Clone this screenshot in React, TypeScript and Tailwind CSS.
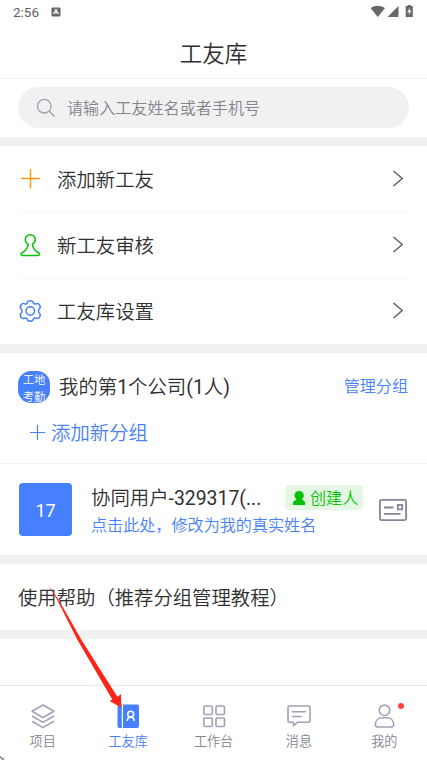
import React from 'react';

const Chevron = () => (
  <svg className="mb-px mr-[5px] h-[18px] w-3" viewBox="0 0 12 18" fill="none" stroke="#55555c" strokeWidth="1.3">
    <path d="M1.5 1 L10.3 8.5 L1.5 16" />
  </svg>
);

const PlusIcon = () => (
  <svg className="mb-px h-6 w-6" viewBox="0 0 24 24" fill="none" stroke="#ff9a0c" strokeWidth="1.4">
    <path d="M12.5 2V21.5M3 11.5H22" />
  </svg>
);

const PawnIcon = () => (
  <svg className="mb-[2px] h-6 w-6" viewBox="0 0 24 24" fill="none" stroke="#07c107" strokeWidth="1.5" strokeLinejoin="round">
    <path d="M10.2 11.2C8.3 10 7.3 8.4 7.3 6.7C7.3 3.8 9.5 1.7 12.3 1.7S17.3 3.8 17.3 6.7C17.3 8.4 16.3 10 14.4 11.2C14.7 14.2 16.4 16.8 18.3 18.5L20.8 19.8C22.2 20.8 21.4 22.5 20 22.5H4.6C3.2 22.5 2.4 20.8 3.8 19.8L6.3 18.5C8.2 16.8 9.9 14.2 10.2 11.2Z" />
  </svg>
);

const GearIcon = () => (
  <svg className="mb-[2px] h-6 w-6" viewBox="0 0 24 24" fill="none" stroke="#4680ff" strokeWidth="1.5" strokeLinejoin="round">
    <path d="M9.2 3.8C9.7 1.1 14.8 1.1 15.3 3.8C16 5.2 17.1 5.3 18.4 4.6C21 3.7 23.5 7.9 21.4 9.7C20.2 10.8 20.2 13.2 21.4 14.3C23.5 16.1 21 20.3 18.4 19.4C17.1 18.7 16 18.8 15.3 20.2C14.8 22.9 9.7 22.9 9.2 20.2C8.5 18.8 7.4 18.7 6.1 19.4C3.5 20.3 1 16.1 3.1 14.3C4.3 13.2 4.3 10.8 3.1 9.7C1 7.9 3.5 3.7 6.1 4.6C7.4 5.3 8.5 5.2 9.2 3.8Z" />
    <circle cx="12.3" cy="12" r="4.2" />
  </svg>
);

const MenuRow = ({ icon, label, last }: { icon: React.ReactNode; label: string; last?: boolean }) => (
  <div className={`mx-[18px] flex items-center ${last ? 'h-[65px]' : 'h-[66px] border-b border-[#f7f7f7]'}`}>
    {icon}
    <span className="ml-[15px] flex-1 pt-[3px] text-[19.4px] leading-7">{label}</span>
    <Chevron />
  </div>
);

const Band = () => <div className="h-[9px] shrink-0 bg-[#f1f1f1]" />;

const Tab = ({ label, active, children }: { label: string; active?: boolean; children: React.ReactNode }) => (
  <div className="flex flex-1 flex-col items-center pt-[17px]">
    <svg className="h-7 w-7" viewBox="0 0 28 28" fill="none" stroke="#a2a1b8" strokeWidth="1.6" strokeLinejoin="round">
      {children}
    </svg>
    <span className={`mt-px text-[13.1px] leading-5 ${active ? 'text-[#4680ff]' : 'text-[#85848f]'}`}>{label}</span>
  </div>
);

export default function App() {
  return (
    <div className="relative flex h-[760px] w-[427px] flex-col overflow-hidden bg-white font-['Roboto','Noto_Sans_CJK_SC',sans-serif] font-[350] text-[#303030]">
      <header className="h-[79px] shrink-0 border-b border-[#f3f3f3]">
        <div className="flex h-6 items-center pl-[13px] pr-[13px] text-[#606060]">
          <span className="text-[13.5px] font-normal leading-6">2:56</span>
          <svg className="ml-3 h-[10px] w-[10px]" viewBox="0 0 10 10">
            <rect x="0.5" y="0.5" width="9" height="9" rx="1" fill="#666" />
            <path d="M2.6 7L5 2.5L7.4 7M3.5 5.7H6.5" stroke="#fff" strokeWidth="1.2" fill="none" />
          </svg>
          <svg className="ml-auto h-[14px] w-11" viewBox="0 0 44 14" fill="#686868">
            <path d="M0.5 3Q7.8-1.5 15 3L7.8 12Z" />
            <path d="M17.5 12L28.5 1V12Z" />
            <path d="M37.8 1V0H40.8V1H42.8V12H35.7V1Z" />
            <path d="M40 2.5L37.3 7H39L38.6 10L41.3 5.7H39.6Z" fill="#fff" />
          </svg>
        </div>
        <h1 className="pt-[13px] text-center text-[22.5px] font-[350] leading-[34px]">工友库</h1>
      </header>

      <div className="h-[58px] shrink-0 px-[18px] pt-2">
        <div className="flex h-[41px] items-center rounded-full bg-[#f1f1f1] pl-[18px] text-[16.1px] text-[#85848f]">
          <svg className="mr-[11px] h-5 w-5" viewBox="0 0 20 20" fill="none" stroke="#a2a1b8" strokeWidth="1.4">
            <circle cx="8.3" cy="8.2" r="6.8" />
            <path d="M13 13L18.6 18.5" />
          </svg>
          <span className="pt-[3px]">请输入工友姓名或者手机号</span>
        </div>
      </div>
      <Band />

      <section className="h-[198px] shrink-0 pt-px">
        <MenuRow icon={<PlusIcon />} label="添加新工友" />
        <MenuRow icon={<PawnIcon />} label="新工友审核" />
        <MenuRow icon={<GearIcon />} label="工友库设置" last />
      </section>
      <Band />

      <section className="h-[111px] shrink-0 border-b border-[#f3f3f3] px-[18px] pt-[18px]">
        <div className="flex h-8 items-center">
          <div className="h-8 w-8 overflow-hidden rounded-[13px] bg-[#4680ff] pt-px text-center text-[11.3px] leading-[17px] text-white">
            <div>工地</div>
            <div>考勤</div>
          </div>
          <span className="ml-[9px] flex-1 pt-[2px] text-[19.4px]">我的第<span className="font-normal">1</span>个公司<span className="font-normal">(1</span>人<span className="font-normal">)</span></span>
          <span className="mr-px pt-px text-[16.1px] text-[#4680ff]">管理分组</span>
        </div>
        <div className="mt-[15px] flex h-[30px] items-center text-[19.4px] text-[#4680ff]">
          <svg className="ml-[11px] mr-[6px] h-4 w-4" viewBox="0 0 16 16" fill="none" stroke="currentColor" strokeWidth="1.2">
            <path d="M8.5 0V15M1 7.5H16" />
          </svg>
          <span className="pt-[2px]">添加新分组</span>
        </div>
      </section>

      <section className="flex h-[91px] shrink-0 pl-[19px] pr-5">
        <div className="mt-[19px] flex h-[53px] w-[53px] items-center justify-center rounded bg-[#4680ff] pt-px text-[18px] font-normal text-white">17</div>
        <div className="ml-[19px] mt-[18px] w-[272px]">
          <div className="flex h-8 items-center">
            <span className="flex-1 pt-[2px] text-[19.4px]">协同用户<span className="font-normal">-329317(...</span></span>
            <span className="mt-[-1px] flex h-[25px] w-[78px] shrink-0 items-center rounded bg-[#e3f7e3] pl-2 text-[16.1px] leading-6 text-[#07c107]">
              <svg className="mr-[5px] h-[14px] w-3 shrink-0" viewBox="0 0 12 14" fill="currentColor">
                <path d="M6 0C3.2 0 1.5 1.9 1.5 4.4C1.5 6 2.4 7.4 3.5 8C3.2 9.3 0 10 0 12V14H12.5V12C12.5 10 9.2 9.3 8.8 8C10 7.2 10.8 6 10.8 4.4C10.8 1.9 8.8 0 6 0Z" />
              </svg>
              <span className="whitespace-nowrap pt-[2px]">创建人</span>
            </span>
          </div>
          <div className="text-[16.1px] leading-[23px] text-[#4680ff]">点击此处，修改为我的真实姓名</div>
        </div>
        <svg className="ml-4 mt-[35px] h-[22px] w-7 shrink-0" viewBox="0 0 28 22" fill="none" stroke="#85849a" strokeWidth="1.8">
          <rect x="0.9" y="0.9" width="26.2" height="20.2" rx="1.5" />
          <path d="M5 8.5H14.5M5 14.8H21.5" />
          <rect x="18.8" y="6" width="4.4" height="4.4" />
        </svg>
      </section>
      <Band />
      <section className="flex h-[66px] shrink-0 items-center px-[18px] pt-[3px] text-[19.35px]">使用帮助（推荐分组管理教程）</section>
      <Band />

      <nav className="mt-auto flex h-[75px] shrink-0 border-t border-[#e8e8e8]">
        <Tab label="项目">
          <path d="M14 2L25 8.2L14 14.5L3 8.2ZM3 13L14 19.4L25 13M3 18.2L14 24.6L25 18.2" />
        </Tab>
        <Tab label="工友库" active>
          <path d="M5 1.5H7.8V25H5.5Q3.5 25 3.5 23V3.5Q3.5 1.5 5 1.5Z" fill="#4680ff" stroke="none" />
          <path d="M9 1.5H23Q25 1.5 25 3.5V23Q25 25 23 25H9Z" fill="#4680ff" stroke="none" />
          <circle cx="16.7" cy="11.2" r="2.9" stroke="#fff" />
          <path d="M13.2 18C13.2 15.5 14.5 14.2 16.7 14.2S20.2 15.5 20.2 18" stroke="#fff" />
        </Tab>
        <Tab label="工作台">
          <rect x="3.8" y="3" width="8.5" height="8.5" rx="1.3" />
          <rect x="16" y="3" width="8.5" height="8.5" rx="1.3" />
          <rect x="3.8" y="15" width="8.5" height="8.5" rx="1.3" />
          <rect x="16" y="15" width="8.5" height="8.5" rx="1.3" />
        </Tab>
        <Tab label="消息">
          <path d="M4.5 3H23.5Q25 3 25 4.5V17.7Q25 19.2 23.5 19.2H12.7L8.5 22.7V19.2H4.5Q3 19.2 3 17.7V4.5Q3 3 4.5 3ZM7 8.8H21M7 13.5H16.5" />
        </Tab>
        <Tab label="我的">
          <circle cx="14.5" cy="7.3" r="5.2" />
          <path d="M5.3 21.3C5.7 17.3 8.5 14.8 11.5 14.8H17.5C20.5 14.8 23.3 17.3 23.7 21.3C23.9 23.6 22.5 24 20.5 24H8.5C6.5 24 5.1 23.6 5.3 21.3Z" />
        </Tab>
      </nav>

      <span className="absolute left-[398px] top-[703px] h-[6px] w-[6px] rounded-full bg-[#ff4141]" />
      <svg className="pointer-events-none absolute left-0 top-0 h-[760px] w-[427px]" viewBox="0 0 427 760">
        <path d="M47.5 584L58.8 600L81.5 640L117.5 697L121 694L121.3 707.5L109.5 701L112.3 699.5L77.5 640L57.3 600Z" fill="#ff2418" />
        <path d="M0 757H1M1 758H2M2 759H4" stroke="#111" strokeWidth="1" />
      </svg>
    </div>
  );
}
